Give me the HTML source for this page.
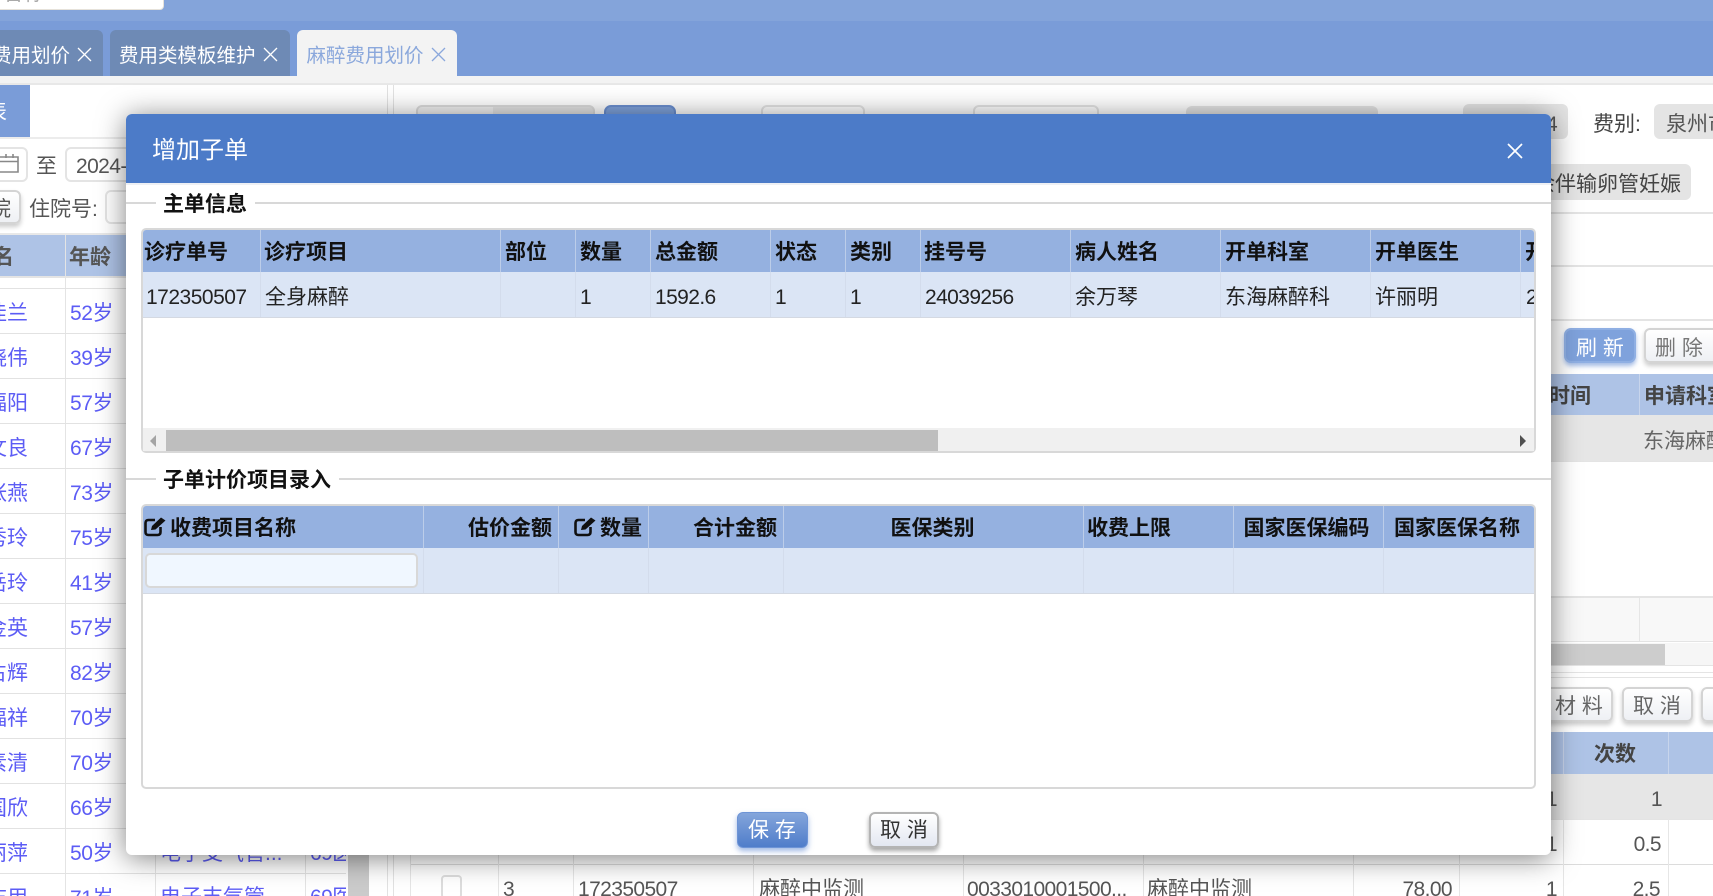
<!DOCTYPE html>
<html lang="zh-CN"><head><meta charset="utf-8"><title>增加子单</title>
<style>
html,body{margin:0;padding:0;width:1713px;height:896px;overflow:hidden;background:#fff}
body{position:relative;font-family:"Liberation Sans","Noto Sans CJK SC",sans-serif;font-size:21px;color:#555}
div,span,svg{position:absolute}
.t{white-space:nowrap;line-height:30px;height:30px;margin-top:2px}
.n{letter-spacing:-.6px}
.b{font-weight:700}
.r{text-align:right}
.c{text-align:center}
.age{color:#5c5cf5;left:70px;letter-spacing:-.4px}
.nm{color:#5c5cf5;left:-14px;width:42px;overflow:hidden;text-align:right}
.lh{left:0;width:346px;height:1px;background:#e2e2e2}
.v{width:1px;background:#e6e6e6}
.h{height:1px;background:#e4e4e4}
.tab{top:30px;height:46px;border-radius:6px 6px 0 0;background:#6e8ab5}
.gi{background:#e4e4e4;border-radius:6px}
.wi{background:#fff;border:2px solid #e4e4e4;border-radius:6px;box-sizing:border-box}
.ob{background:linear-gradient(#fff,#eef0f4);border:2px solid #d4d4d4;border-radius:6px;box-sizing:border-box;box-shadow:0 3px 5px rgba(0,0,0,.2)}
#m{left:126px;top:114px;width:1425px;height:741px;background:#fff;border-radius:6px;box-shadow:0 3px 28px rgba(0,0,0,.5)}
.mt{color:#222}
.mh{color:#111;font-weight:700}
.sh{width:1px;background:#bccde9}
.sb{width:1px;background:#d3dcec}
</style></head><body>

<!-- top bars -->
<div style="left:0;top:0;width:1713px;height:21px;background:#84a4da"></div>
<div style="left:0;top:21px;width:1713px;height:55px;background:#7a9cd8"></div>
<div style="left:0;top:76px;width:1713px;height:7px;background:#f3f3f3"></div>
<div style="left:0;top:83px;width:1713px;height:2px;background:#e8e8e8"></div>
<div style="left:-4px;top:-20px;width:168px;height:30px;background:#fff;border:1px solid #e6e2da;border-radius:4px;box-sizing:border-box"></div>
<div class="t" style="left:2px;top:-23px;color:#aaa">名称:</div>

<!-- tabs -->
<div class="tab" style="left:-10px;width:113px"></div>
<div class="t" style="left:-8px;top:39px;font-size:19.5px;color:#fff">费用划价</div>
<svg style="left:77px;top:47px" width="15" height="15" viewBox="0 0 15 15"><path d="M1 1L14 14M14 1L1 14" stroke="#fff" stroke-width="1.3" fill="none"/></svg>
<div class="tab" style="left:110px;width:180px"></div>
<div class="t" style="left:119px;top:39px;font-size:19.5px;color:#fff">费用类模板维护</div>
<svg style="left:263px;top:47px" width="15" height="15" viewBox="0 0 15 15"><path d="M1 1L14 14M14 1L1 14" stroke="#fff" stroke-width="1.3" fill="none"/></svg>
<div class="tab" style="left:297px;width:160px;background:#f3f3f3"></div>
<div class="t" style="left:306.5px;top:39px;font-size:19.5px;color:#8ba8dc">麻醉费用划价</div>
<svg style="left:431px;top:47px" width="15" height="15" viewBox="0 0 15 15"><path d="M1 1L14 14M14 1L1 14" stroke="#8ba8dc" stroke-width="1.3" fill="none"/></svg>

<!-- left pane -->
<div style="left:0;top:85px;width:30px;height:52px;background:#7a9cd8"></div>
<div class="t" style="left:-14px;top:96px;color:#fff">表</div>
<div style="left:0;top:137px;width:385px;height:2px;background:#ececec"></div>
<div class="wi" style="left:-10px;top:147px;width:38px;height:35px"></div>
<svg style="left:0;top:154px" width="20" height="20" viewBox="0 0 20 20"><path d="M0 3H18V18H0M0 7.5H18M6 0V4M13 0V4" stroke="#888" stroke-width="1.6" fill="none"/></svg>
<div class="t" style="left:36px;top:150px">至</div>
<div class="wi" style="left:65px;top:147px;width:90px;height:35px"></div>
<div class="t n" style="left:76px;top:150px">2024-</div>
<div class="ob" style="left:-10px;top:190px;width:31px;height:34px"></div>
<div class="t" style="left:-12px;top:193px;width:23px;overflow:hidden;text-align:right">院</div>
<div class="t" style="left:29px;top:193px">住院号:</div>
<div class="wi" style="left:105px;top:190px;width:40px;height:34px"></div>

<div style="left:0;top:233px;width:346px;height:2px;background:#e8e8e8"></div>
<div style="left:0;top:235px;width:346px;height:41px;background:#aec3e6"></div>
<div style="left:0;top:276px;width:346px;height:2px;background:#e4e4e4"></div>
<div class="v" style="left:65px;top:235px;height:661px;background:#e4e4e4"></div>
<div class="v" style="left:155px;top:235px;height:661px;background:#e4e4e4"></div>
<div class="v" style="left:305px;top:235px;height:661px;background:#e4e4e4"></div>
<div class="t b" style="left:-14px;top:241px;width:28px;overflow:hidden;text-align:right;color:#555">名</div>
<div class="t b" style="left:69px;top:241px;color:#555">年龄</div>

<div class="lh" style="top:288px"></div><div class="lh" style="top:333px"></div><div class="lh" style="top:378px"></div><div class="lh" style="top:423px"></div><div class="lh" style="top:468px"></div><div class="lh" style="top:513px"></div><div class="lh" style="top:558px"></div><div class="lh" style="top:603px"></div><div class="lh" style="top:648px"></div><div class="lh" style="top:693px"></div><div class="lh" style="top:738px"></div><div class="lh" style="top:783px"></div><div class="lh" style="top:828px"></div><div class="lh" style="top:873px"></div>

<div class="t nm" style="top:297px">佳兰</div><div class="t age" style="top:297px">52岁</div>
<div class="t nm" style="top:342px">晓伟</div><div class="t age" style="top:342px">39岁</div>
<div class="t nm" style="top:387px">福阳</div><div class="t age" style="top:387px">57岁</div>
<div class="t nm" style="top:432px">文良</div><div class="t age" style="top:432px">67岁</div>
<div class="t nm" style="top:477px">张燕</div><div class="t age" style="top:477px">73岁</div>
<div class="t nm" style="top:522px">秀玲</div><div class="t age" style="top:522px">75岁</div>
<div class="t nm" style="top:567px">岳玲</div><div class="t age" style="top:567px">41岁</div>
<div class="t nm" style="top:612px">金英</div><div class="t age" style="top:612px">57岁</div>
<div class="t nm" style="top:657px">占辉</div><div class="t age" style="top:657px">82岁</div>
<div class="t nm" style="top:702px">福祥</div><div class="t age" style="top:702px">70岁</div>
<div class="t nm" style="top:747px">素清</div><div class="t age" style="top:747px">70岁</div>
<div class="t nm" style="top:792px">国欣</div><div class="t age" style="top:792px">66岁</div>
<div class="t nm" style="top:837px">丽萍</div><div class="t age" style="top:837px">50岁</div>
<div class="t nm" style="top:882px">志用</div><div class="t age" style="top:882px">71岁</div>
<div class="t" style="left:160px;top:837px;color:#5c5cf5">电子支气管...</div>
<div class="t n" style="left:310px;top:837px;color:#5c5cf5;width:36px;overflow:hidden">69医</div>
<div class="t" style="left:160px;top:881px;color:#5c5cf5">电子支气管</div>
<div class="t n" style="left:310px;top:881px;color:#5c5cf5;width:36px;overflow:hidden">69医</div>
<div style="left:348px;top:290px;width:21px;height:606px;background:#cbcbcb"></div>

<!-- splitter -->
<div style="left:387px;top:85px;width:1px;height:811px;background:#e2e2e2"></div>
<div style="left:393px;top:85px;width:1px;height:811px;background:#e2e2e2"></div>

<!-- right pane top -->
<div style="left:416px;top:105px;width:179px;height:36px;background:#e4e4e4;border:2px solid #dcdcdc;border-radius:6px;box-sizing:border-box"></div>
<div style="left:418px;top:107px;width:75px;height:34px;background:#f2f2f2;border-radius:4px 0 0 0"></div>
<div style="left:604px;top:105px;width:72px;height:36px;background:#7fa2dc;border:2px solid #6b8fd0;border-radius:7px;box-sizing:border-box"></div>
<div class="wi" style="left:761px;top:105px;width:104px;height:36px"></div>
<div class="wi" style="left:973px;top:105px;width:126px;height:36px"></div>
<div class="t" style="left:708px;top:110px;color:#444">姓名</div>
<div class="t" style="left:895px;top:110px;color:#444">科室</div>
<div class="t" style="left:1130px;top:110px;color:#444">病区</div>
<div class="gi" style="left:1186px;top:106px;width:192px;height:35px"></div>
<div class="t" style="left:1408px;top:110px;color:#444">床号</div>
<div class="gi" style="left:1463px;top:104px;width:105px;height:35px"></div>
<div class="t n" style="left:1546px;top:108px">4</div>
<div class="t" style="left:1593px;top:108px;color:#444">费别:</div>
<div class="gi" style="left:1654px;top:104px;width:70px;height:35px"></div>
<div class="t" style="left:1666px;top:108px;width:47px;overflow:hidden;color:#555">泉州市</div>
<div class="gi" style="left:1500px;top:164px;width:191px;height:36px"></div>
<div class="t" style="left:1528px;top:168px;color:#444;width:153px;overflow:hidden;direction:rtl">全身麻醉余伴输卵管妊娠</div>
<div class="h" style="left:394px;top:212px;width:1319px;height:2px"></div>
<div class="h" style="left:394px;top:265px;width:1319px;height:2px"></div>
<div class="h" style="left:394px;top:319px;width:1319px;height:2px"></div>

<div style="left:1564px;top:328px;width:72px;height:35px;background:#7fa2dc;border:2px solid #8fafe3;border-radius:7px;box-sizing:border-box;box-shadow:0 3px 5px rgba(100,140,210,.6)"></div>
<div class="t" style="left:1576px;top:332px;color:#fff">刷 新</div>
<div class="ob" style="left:1644px;top:328px;width:80px;height:35px"></div>
<div class="t" style="left:1655px;top:332px;color:#777">删 除</div>

<div style="left:394px;top:374px;width:1319px;height:41px;background:#aec3e6"></div>
<div class="v" style="left:1639px;top:374px;height:41px;background:#c8d5ec"></div>
<div class="t b" style="left:1549px;top:380px;color:#444">时间</div>
<div class="t b" style="left:1644px;top:380px;color:#444">申请科室</div>
<div style="left:394px;top:415px;width:1319px;height:46px;background:#e6e6e6"></div>
<div class="h" style="left:394px;top:461px;width:1319px"></div>
<div class="v" style="left:1639px;top:415px;height:46px"></div>
<div class="t" style="left:1643px;top:425px;color:#666">东海麻醉</div>

<div class="h" style="left:394px;top:596px;width:1319px;height:2px"></div>
<div style="left:394px;top:598px;width:1319px;height:43px;background:#f8f8f8"></div>
<div class="h" style="left:394px;top:641px;width:1319px"></div>
<div class="v" style="left:1639px;top:598px;height:43px"></div>
<div style="left:394px;top:643px;width:1319px;height:22px;background:#f6f6f6"></div>
<div style="left:440px;top:644px;width:1225px;height:21px;background:#cdcdcd"></div>
<div class="h" style="left:394px;top:665px;width:1319px"></div>
<div class="h" style="left:394px;top:672px;width:1319px"></div>
<div class="h" style="left:394px;top:677px;width:1319px"></div>

<div class="ob" style="left:1520px;top:687px;width:93px;height:35px"></div>
<div class="t" style="left:1555px;top:690px;color:#666">材 料</div>
<div class="ob" style="left:1622px;top:687px;width:71px;height:35px"></div>
<div class="t" style="left:1633px;top:690px;color:#666">取 消</div>
<div class="ob" style="left:1701px;top:687px;width:40px;height:35px"></div>

<div style="left:410px;top:732px;width:1303px;height:42px;background:#aec3e6"></div>
<div class="v" style="left:1563px;top:732px;height:42px;background:#c8d5ec"></div>
<div class="v" style="left:1668px;top:732px;height:42px;background:#c8d5ec"></div>
<div class="t b" style="left:1594px;top:738px;color:#444">次数</div>
<div style="left:410px;top:774px;width:1303px;height:45px;background:#e6e6e6"></div>
<div class="h" style="left:410px;top:819px;width:1303px"></div>
<div class="h" style="left:410px;top:864px;width:1303px;background:#dcdcdc"></div>
<div class="v" style="left:1563px;top:774px;height:122px"></div>
<div class="v" style="left:1668px;top:774px;height:122px"></div>
<div class="v" style="left:1459px;top:774px;height:122px"></div>
<div class="v" style="left:1353px;top:774px;height:122px"></div>
<div class="v" style="left:1143px;top:774px;height:122px"></div>
<div class="v" style="left:963px;top:774px;height:122px"></div>
<div class="v" style="left:753px;top:774px;height:122px"></div>
<div class="v" style="left:573px;top:774px;height:122px"></div>
<div class="v" style="left:498px;top:774px;height:122px"></div>
<div class="v" style="left:410px;top:774px;height:122px"></div>
<div class="t n r" style="left:1500px;top:783px;width:57px">1</div>
<div class="t n r" style="left:1600px;top:783px;width:62px">1</div>
<div class="t n r" style="left:1500px;top:828px;width:57px">1</div>
<div class="t n r" style="left:1600px;top:828px;width:61px">0.5</div>
<div style="left:441px;top:875px;width:21px;height:24px;border:2px solid #ddd;border-radius:4px;box-sizing:border-box;background:#fff"></div>
<div class="t n" style="left:503px;top:873px">3</div>
<div class="t n" style="left:578px;top:873px">172350507</div>
<div class="t" style="left:759px;top:873px">麻醉中监测</div>
<div class="t n" style="left:967px;top:873px">0033010001500...</div>
<div class="t" style="left:1147px;top:873px">麻醉中监测</div>
<div class="t n r" style="left:1380px;top:873px;width:72px">78.00</div>
<div class="t n r" style="left:1500px;top:873px;width:57px">1</div>
<div class="t n r" style="left:1600px;top:873px;width:60px">2.5</div>

<!-- modal -->
<div id="m">
  <div style="left:0;top:0;width:1425px;height:69px;background:#4c7bc8;border-radius:6px 6px 0 0"></div>
  <div style="left:0;top:69px;width:1425px;height:2px;background:#eef0f4"></div>
  <div class="t" style="left:26px;top:20px;font-size:24px;color:#fff">增加子单</div>
  <svg style="left:1381px;top:29px" width="16" height="16" viewBox="0 0 16 16"><path d="M1 1L15 15M15 1L1 15" stroke="#fff" stroke-width="1.7" fill="none"/></svg>

  <!-- section 1 -->
  <div style="left:0;top:88px;width:1425px;height:2px;background:#d8d8d8"></div>
  <div style="left:30px;top:78px;width:99px;height:22px;background:#fff"></div>
  <div class="t b" style="left:37px;top:74px;color:#111">主单信息</div>

  <div style="left:15px;top:114px;width:1395px;height:225px;border:2px solid #d8d8d8;border-radius:5px;box-sizing:border-box;background:#fff"></div>
  <div style="left:17px;top:116px;width:1391px;height:42px;background:#95b1e0;border-radius:3px 3px 0 0"></div>
  <div style="left:17px;top:158px;width:1391px;height:45px;background:#dbe5f5"></div>
  <div style="left:17px;top:203px;width:1391px;height:1px;background:#d4d9e2"></div>

  <div class="sh" style="left:134px;top:116px;height:42px"></div><div class="sh" style="left:374px;top:116px;height:42px"></div><div class="sh" style="left:449px;top:116px;height:42px"></div><div class="sh" style="left:524px;top:116px;height:42px"></div><div class="sh" style="left:644px;top:116px;height:42px"></div><div class="sh" style="left:719px;top:116px;height:42px"></div><div class="sh" style="left:794px;top:116px;height:42px"></div><div class="sh" style="left:944px;top:116px;height:42px"></div><div class="sh" style="left:1094px;top:116px;height:42px"></div><div class="sh" style="left:1244px;top:116px;height:42px"></div><div class="sh" style="left:1394px;top:116px;height:42px"></div>
  <div class="sb" style="left:134px;top:158px;height:45px"></div><div class="sb" style="left:374px;top:158px;height:45px"></div><div class="sb" style="left:449px;top:158px;height:45px"></div><div class="sb" style="left:524px;top:158px;height:45px"></div><div class="sb" style="left:644px;top:158px;height:45px"></div><div class="sb" style="left:719px;top:158px;height:45px"></div><div class="sb" style="left:794px;top:158px;height:45px"></div><div class="sb" style="left:944px;top:158px;height:45px"></div><div class="sb" style="left:1094px;top:158px;height:45px"></div><div class="sb" style="left:1244px;top:158px;height:45px"></div><div class="sb" style="left:1394px;top:158px;height:45px"></div>

  <div class="t mh" style="left:18px;top:122px">诊疗单号</div>
  <div class="t mh" style="left:138px;top:122px">诊疗项目</div>
  <div class="t mh" style="left:379px;top:122px">部位</div>
  <div class="t mh" style="left:454px;top:122px">数量</div>
  <div class="t mh" style="left:529px;top:122px">总金额</div>
  <div class="t mh" style="left:649px;top:122px">状态</div>
  <div class="t mh" style="left:724px;top:122px">类别</div>
  <div class="t mh" style="left:798px;top:122px">挂号号</div>
  <div class="t mh" style="left:949px;top:122px">病人姓名</div>
  <div class="t mh" style="left:1099px;top:122px">开单科室</div>
  <div class="t mh" style="left:1249px;top:122px">开单医生</div>
  <div class="t mh" style="left:1399px;top:122px;width:9px;overflow:hidden">开</div>

  <div class="t n mt" style="left:20px;top:167px;letter-spacing:-.5px">172350507</div>
  <div class="t mt" style="left:139px;top:167px">全身麻醉</div>
  <div class="t n mt" style="left:454px;top:167px">1</div>
  <div class="t n mt" style="left:529px;top:167px">1592.6</div>
  <div class="t n mt" style="left:649px;top:167px">1</div>
  <div class="t n mt" style="left:724px;top:167px">1</div>
  <div class="t n mt" style="left:799px;top:167px">24039256</div>
  <div class="t mt" style="left:949px;top:167px">余万琴</div>
  <div class="t mt" style="left:1099px;top:167px">东海麻醉科</div>
  <div class="t mt" style="left:1249px;top:167px">许丽明</div>
  <div class="t n mt" style="left:1400px;top:167px;width:8px;overflow:hidden">2</div>

  <div style="left:17px;top:314px;width:1391px;height:23px;background:#f0f0f0"></div>
  <div style="left:40px;top:316px;width:772px;height:21px;background:#bebebe"></div>
  <svg style="left:24px;top:321px" width="7" height="12" viewBox="0 0 7 12"><path d="M6 0V12L0 6Z" fill="#a4a4a4"/></svg>
  <svg style="left:1394px;top:321px" width="7" height="12" viewBox="0 0 7 12"><path d="M0 0V12L6 6Z" fill="#505050"/></svg>

  <!-- section 2 -->
  <div style="left:0;top:364px;width:1425px;height:2px;background:#d8d8d8"></div>
  <div style="left:30px;top:354px;width:183px;height:22px;background:#fff"></div>
  <div class="t b" style="left:37px;top:350px;color:#111">子单计价项目录入</div>

  <div style="left:15px;top:390px;width:1395px;height:285px;border:2px solid #d8d8d8;border-radius:5px;box-sizing:border-box;background:#fff"></div>
  <div style="left:17px;top:392px;width:1391px;height:42px;background:#95b1e0;border-radius:3px 3px 0 0"></div>
  <div style="left:17px;top:434px;width:1391px;height:45px;background:#dbe5f5"></div>
  <div style="left:17px;top:479px;width:1391px;height:1px;background:#d4d9e2"></div>

  <div class="sh" style="left:297px;top:392px;height:42px"></div><div class="sh" style="left:432px;top:392px;height:42px"></div><div class="sh" style="left:522px;top:392px;height:42px"></div><div class="sh" style="left:657px;top:392px;height:42px"></div><div class="sh" style="left:957px;top:392px;height:42px"></div><div class="sh" style="left:1107px;top:392px;height:42px"></div><div class="sh" style="left:1257px;top:392px;height:42px"></div>
  <div class="sb" style="left:297px;top:434px;height:45px"></div><div class="sb" style="left:432px;top:434px;height:45px"></div><div class="sb" style="left:522px;top:434px;height:45px"></div><div class="sb" style="left:657px;top:434px;height:45px"></div><div class="sb" style="left:957px;top:434px;height:45px"></div><div class="sb" style="left:1107px;top:434px;height:45px"></div><div class="sb" style="left:1257px;top:434px;height:45px"></div>

  <svg style="left:18px;top:402px" width="23" height="21" viewBox="0 0 23 21"><path d="M16.5 11V16Q16.5 19 13.5 19H4.5Q1.5 19 1.5 16V7Q1.5 4 4.5 4H11" stroke="#111" stroke-width="2.6" fill="none"/><path d="M7 14L8 10L17 1.5L21.5 4.5L11.5 13.5Z" fill="#111"/></svg>
  <div class="t mh" style="left:44px;top:398px">收费项目名称</div>
  <div class="t mh r" style="left:299px;top:398px;width:127px">估价金额</div>
  <svg style="left:448px;top:402px" width="23" height="21" viewBox="0 0 23 21"><path d="M16.5 11V16Q16.5 19 13.5 19H4.5Q1.5 19 1.5 16V7Q1.5 4 4.5 4H11" stroke="#111" stroke-width="2.6" fill="none"/><path d="M7 14L8 10L17 1.5L21.5 4.5L11.5 13.5Z" fill="#111"/></svg>
  <div class="t mh" style="left:474px;top:398px">数量</div>
  <div class="t mh r" style="left:524px;top:398px;width:127px">合计金额</div>
  <div class="t mh c" style="left:657px;top:398px;width:299px">医保类别</div>
  <div class="t mh" style="left:961px;top:398px">收费上限</div>
  <div class="t mh c" style="left:1106px;top:398px;width:149px">国家医保编码</div>
  <div class="t mh c" style="left:1256px;top:398px;width:150px">国家医保名称</div>

  <div style="left:19px;top:439px;width:273px;height:35px;background:#f0f7ff;border:2px solid #d8d8d8;border-radius:5px;box-sizing:border-box"></div>

  <!-- buttons -->
  <div style="left:611px;top:698px;width:71px;height:36px;background:linear-gradient(#84a5db,#4f7dca);border:1px solid #6d94d6;border-radius:6px;box-sizing:border-box;box-shadow:0 3px 6px rgba(80,125,205,.55)"></div>
  <div class="t" style="left:622px;top:700px;color:#fff">保 存</div>
  <div style="left:743px;top:698px;width:70px;height:36px;background:linear-gradient(#fff,#e3e7f1);border:2px solid #b4b4b4;border-radius:6px;box-sizing:border-box;box-shadow:0 3px 5px rgba(0,0,0,.35)"></div>
  <div class="t" style="left:754px;top:700px;color:#333">取 消</div>
</div>
</body></html>
